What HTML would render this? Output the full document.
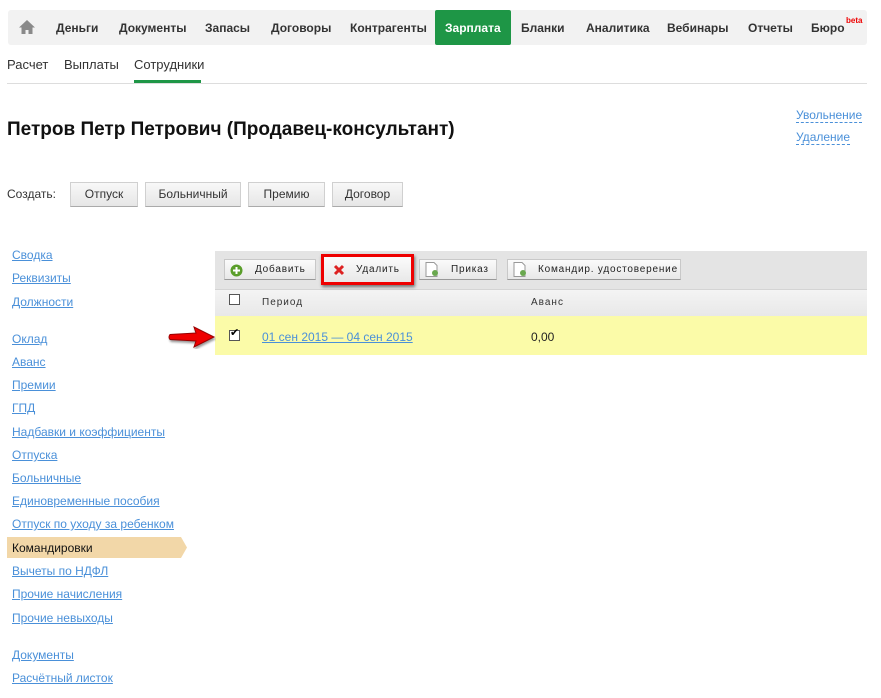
<!DOCTYPE html>
<html><head><meta charset="utf-8"><style>
*{margin:0;padding:0;box-sizing:border-box}
body{width:881px;height:698px;background:#fff;font-family:"Liberation Sans","DejaVu Sans",sans-serif;color:#222;position:relative;overflow:hidden}
.a{position:absolute;white-space:nowrap}
.nav{left:8px;top:10px;width:859px;height:35px;background:#f2f2f2;border-radius:3px}
.ni{top:21px;font-size:12px;font-weight:bold;color:#333}
.sub{top:57px;font-size:13px;color:#333}
.btn{height:25px;top:182px;background:linear-gradient(#f8f8f8,#e6e6e6);border:1px solid #d0d0d0;border-bottom-color:#aaa;font-size:12px;color:#333;text-align:center;line-height:23px}
.lk{left:12px;font-size:12px;color:#4a90d9;text-decoration:underline}
.tb{top:259px;height:21px;background:linear-gradient(#fbfbfb,#e8e8e8);border:1px solid #c8c8c8;border-bottom-color:#999;font-size:10px;letter-spacing:0.8px;color:#222;line-height:20px}
.cb{width:11px;height:11px;border:1px solid #555;background:#fff}
</style></head><body>
<div class="a nav"></div>
<svg class="a" style="left:18px;top:19px" width="18" height="16" viewBox="0 0 18 16"><path d="M9 1L1 8.5h2.5V15h4v-4h3v4h4V8.5H17z" fill="#8a8a8a"/></svg>
<div class="a ni" style="left:56px">Деньги</div>
<div class="a ni" style="left:119px">Документы</div>
<div class="a ni" style="left:205px">Запасы</div>
<div class="a ni" style="left:271px">Договоры</div>
<div class="a ni" style="left:350px">Контрагенты</div>
<div class="a" style="left:435px;top:10px;width:76px;height:35px;background:#1e9646;border-radius:2px"></div>
<div class="a ni" style="left:445px;color:#fff">Зарплата</div>
<div class="a ni" style="left:521px">Бланки</div>
<div class="a ni" style="left:586px">Аналитика</div>
<div class="a ni" style="left:667px">Вебинары</div>
<div class="a ni" style="left:748px">Отчеты</div>
<div class="a ni" style="left:811px">Бюро</div>
<div class="a" style="left:846px;top:16px;font-size:8px;font-weight:bold;color:#e00">beta</div>
<div class="a sub" style="left:7px">Расчет</div>
<div class="a sub" style="left:64px">Выплаты</div>
<div class="a sub" style="left:134px">Сотрудники</div>
<div class="a" style="left:134px;top:80px;width:67px;height:3px;background:#1e9646"></div>
<div class="a" style="left:7px;top:83px;width:860px;height:1px;background:#ddd"></div>
<div class="a" style="left:7px;top:119px;font-size:19px;font-weight:bold;color:#111">Петров Петр Петрович (Продавец-консультант)</div>
<div class="a" style="left:796px;top:108px;font-size:12px;color:#4a90d9;border-bottom:1px dashed #4a90d9;line-height:14px">Увольнение</div>
<div class="a" style="left:796px;top:130px;font-size:12px;color:#4a90d9;border-bottom:1px dashed #4a90d9;line-height:14px">Удаление</div>
<div class="a" style="left:7px;top:187px;font-size:12px;color:#333">Создать:</div>
<div class="a btn" style="left:70px;width:68px">Отпуск</div>
<div class="a btn" style="left:145px;width:96px">Больничный</div>
<div class="a btn" style="left:248px;width:77px">Премию</div>
<div class="a btn" style="left:332px;width:71px">Договор</div>
<div class="a lk" style="top:248px">Сводка</div>
<div class="a lk" style="top:271px">Реквизиты</div>
<div class="a lk" style="top:295px">Должности</div>
<div class="a lk" style="top:332px">Оклад</div>
<div class="a lk" style="top:355px">Аванс</div>
<div class="a lk" style="top:378px">Премии</div>
<div class="a lk" style="top:401px">ГПД</div>
<div class="a lk" style="top:425px">Надбавки и коэффициенты</div>
<div class="a lk" style="top:448px">Отпуска</div>
<div class="a lk" style="top:471px">Больничные</div>
<div class="a lk" style="top:494px">Единовременные пособия</div>
<div class="a lk" style="top:517px">Отпуск по уходу за ребенком</div>
<svg class="a" style="left:7px;top:537px" width="180" height="21"><path d="M0 0H174L180 10.5L174 21H0z" fill="#f2d7a8"/></svg>
<div class="a" style="left:12px;top:541px;font-size:12px;color:#111">Командировки</div>
<div class="a lk" style="top:564px">Вычеты по НДФЛ</div>
<div class="a lk" style="top:587px">Прочие начисления</div>
<div class="a lk" style="top:611px">Прочие невыходы</div>
<div class="a lk" style="top:648px">Документы</div>
<div class="a lk" style="top:671px">Расчётный листок</div>
<div class="a" style="left:215px;top:251px;width:652px;height:38px;background:#e4e4e4"></div>
<div class="a" style="left:215px;top:289px;width:652px;height:27px;background:linear-gradient(#f4f4f4,#e8e8e8);border-top:1px solid #d4d4d4"></div>
<div class="a" style="left:215px;top:316px;width:652px;height:39px;background:#fbfba8"></div>
<div class="a tb" style="left:224px;width:92px;padding-left:30px">Добавить</div>
<svg class="a" style="left:230px;top:264px" width="13" height="13"><circle cx="6.5" cy="6.5" r="6" fill="#5a9e2a"/><path d="M6.5 3v7M3 6.5h7" stroke="#fff" stroke-width="2"/></svg>
<div class="a" style="left:321px;top:254px;width:93px;height:31px;border:3px solid #e00;box-shadow:1px 2px 3px rgba(0,0,0,.5)"></div>
<div class="a tb" style="left:324px;top:257px;width:87px;height:25px;line-height:25px;padding-left:32px;border:none">Удалить</div>
<svg class="a" style="left:333px;top:264px" width="12" height="12"><path d="M2 2L10 10M10 2L2 10" stroke="#d22" stroke-width="3"/></svg>
<div class="a tb" style="left:419px;width:78px;padding-left:31px">Приказ</div>
<svg class="a" style="left:425px;top:262px" width="14" height="15"><path d="M1 .5h8l3 3v11H1z" fill="#fff" stroke="#999"/><circle cx="10" cy="11" r="3" fill="#6aa84f"/></svg>
<div class="a tb" style="left:507px;width:174px;padding-left:30px;overflow:hidden">Командир. удостоверение</div>
<svg class="a" style="left:513px;top:262px" width="14" height="15"><path d="M1 .5h8l3 3v11H1z" fill="#fff" stroke="#999"/><circle cx="10" cy="11" r="3" fill="#6aa84f"/></svg>
<div class="a cb" style="left:229px;top:294px"></div>
<div class="a" style="left:262px;top:297px;font-size:10px;letter-spacing:1px;color:#333">Период</div>
<div class="a" style="left:531px;top:297px;font-size:10px;letter-spacing:1px;color:#333">Аванс</div>
<div class="a cb" style="left:229px;top:330px"></div>
<div class="a" style="left:230px;top:326px;font-size:11px;font-weight:bold;color:#000">✔</div>
<div class="a" style="left:262px;top:330px;font-size:12px;color:#4a90d9;text-decoration:underline">01 сен 2015 — 04 сен 2015</div>
<div class="a" style="left:531px;top:330px;font-size:12px;color:#222">0,00</div>
<svg class="a" style="left:166px;top:325px" width="50" height="24"><path d="M4 9.5Q2 12 4 14.5L30 16L28 22L48 12L28 2L30 8Z" fill="#e00" stroke="#900" stroke-width="1" filter="drop-shadow(1px 2px 1px rgba(0,0,0,.4))"/></svg>
</body></html>
